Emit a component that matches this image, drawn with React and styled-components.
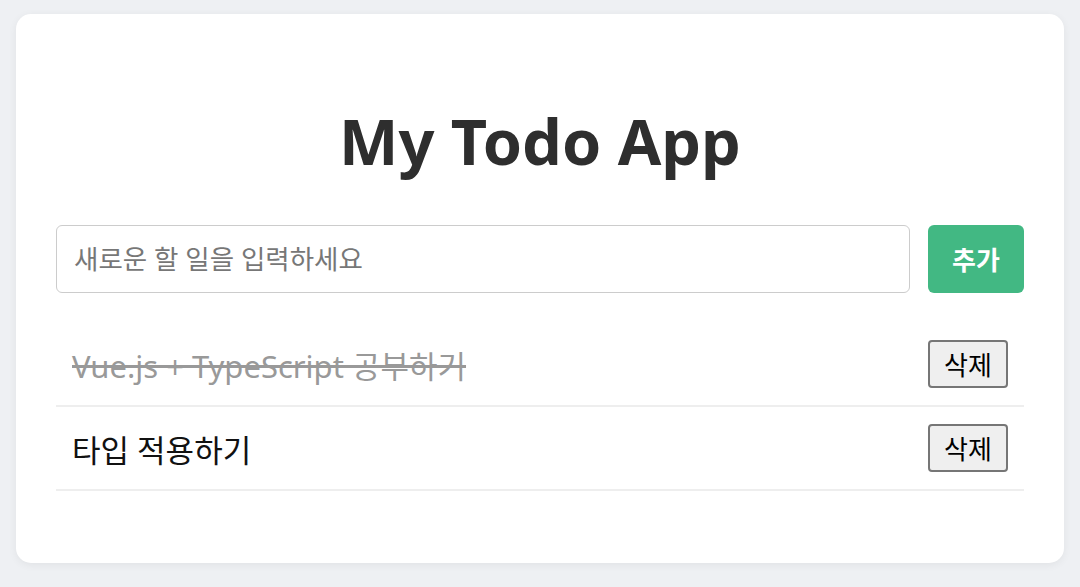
import React, { useState } from "react";
import styled, { createGlobalStyle } from "styled-components";

const Global = createGlobalStyle`
  html, body { margin: 0; padding: 0; }
  body {
    background: #eef0f3;
    font-family: "Noto Sans", "Noto Sans CJK KR", sans-serif;
  }
  * { box-sizing: border-box; }
`;

const Page = styled.div`
  padding: 14px 16px 24px;
`;

const Card = styled.div`
  background: #ffffff;
  border-radius: 15px;
  box-shadow: 0 2px 8px rgba(0, 0, 0, 0.06);
  padding: 40px 40px 72px;
`;

const Title = styled.h1`
  margin: 43px 0 41px;
  text-align: center;
  font-size: 63px;
  line-height: 87px;
  font-weight: 700;
  color: #2e2e2e;
`;

const Form = styled.div`
  display: flex;
  gap: 18px;
  height: 68px;
`;

const Input = styled.input`
  flex: 1;
  height: 100%;
  border: 1px solid #cccccc;
  border-radius: 6px;
  padding: 0 17px;
  font-family: "Noto Sans", "Noto Sans CJK KR", sans-serif;
  font-size: 26.5px;
  color: #333;
  outline: none;
  &::placeholder { color: #777; }
`;

const AddButton = styled.button`
  width: 96px;
  height: 100%;
  border: none;
  border-radius: 6px;
  background: #42b883;
  color: #fff;
  font-family: "Noto Sans", "Noto Sans CJK KR", sans-serif;
  font-size: 26px;
  font-weight: 700;
`;

const List = styled.ul`
  list-style: none;
  margin: 30px 0 0;
  padding: 0;
`;

const Item = styled.li`
  display: flex;
  align-items: center;
  justify-content: space-between;
  height: 84px;
  padding: 0 16px;
  border-bottom: 2px solid #eeeeee;
`;

const ItemText = styled.span`
  font-size: 31px;
  color: ${(p) => (p.$done ? "#999" : "#111")};
  text-decoration: ${(p) => (p.$done ? "line-through" : "none")};
  cursor: pointer;
`;

const DeleteButton = styled.button`
  width: 80px;
  height: 48px;
  border: 2px solid #767676;
  border-radius: 4px;
  background: #efefef;
  color: #000;
  font-family: "Noto Sans", "Noto Sans CJK KR", sans-serif;
  font-size: 26px;
  padding: 0;
`;

export default function App() {
  const [todos, setTodos] = useState([
    { id: 1, text: "Vue.js + TypeScript 공부하기", done: true },
    { id: 2, text: "타입 적용하기", done: false },
  ]);
  const [value, setValue] = useState("");

  const add = () => {
    if (!value.trim()) return;
    setTodos([...todos, { id: Date.now(), text: value, done: false }]);
    setValue("");
  };

  return (
    <Page>
      <Global />
      <Card>
        <Title>My Todo App</Title>
        <Form>
          <Input
            placeholder="새로운 할 일을 입력하세요"
            value={value}
            onChange={(e) => setValue(e.target.value)}
          />
          <AddButton onClick={add}>추가</AddButton>
        </Form>
        <List>
          {todos.map((t) => (
            <Item key={t.id}>
              <ItemText
                $done={t.done}
                onClick={() =>
                  setTodos(todos.map((x) => (x.id === t.id ? { ...x, done: !x.done } : x)))
                }
              >
                {t.text}
              </ItemText>
              <DeleteButton onClick={() => setTodos(todos.filter((x) => x.id !== t.id))}>
                삭제
              </DeleteButton>
            </Item>
          ))}
        </List>
      </Card>
    </Page>
  );
}
